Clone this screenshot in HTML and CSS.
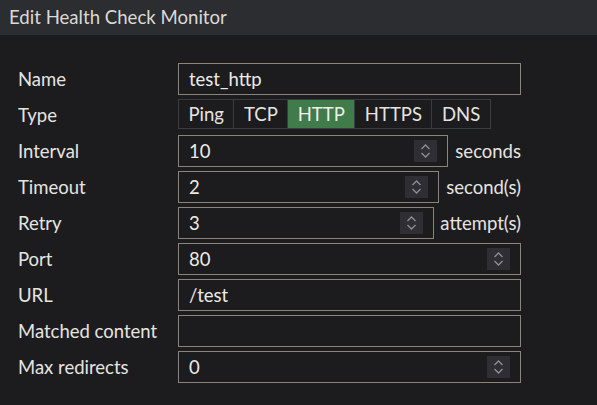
FILE: index.html
```html
<!DOCTYPE html>
<html>
<head>
<meta charset="utf-8">
<link rel="stylesheet" href="styles.css">
</head>
<body>
<div class="dialog">
  <div class="header">Edit Health Check Monitor</div>
  <div class="form">
    <div class="row">
      <div class="label">Name</div>
      <div class="field"><div class="input"><span class="val">test_http</span></div></div>
    </div>
    <div class="row">
      <div class="label">Type</div>
      <div class="field">
        <div class="seg">
          <span class="opt">Ping</span>
          <span class="opt">TCP</span>
          <span class="opt active">HTTP</span>
          <span class="opt">HTTPS</span>
          <span class="opt">DNS</span>
        </div>
      </div>
    </div>
    <div class="row">
      <div class="label">Interval</div>
      <div class="field">
        <div class="input"><span class="val">10</span><span class="spin"><svg viewBox="0 0 23 22" width="23" height="22"><path d="M7.5 9 L11.5 5 L15.5 9 M7.5 13 L11.5 17 L15.5 13" fill="none" stroke="#8f8f96" stroke-width="1.3"/></svg></span></div>
        <span class="unit">seconds</span>
      </div>
    </div>
    <div class="row">
      <div class="label">Timeout</div>
      <div class="field">
        <div class="input"><span class="val">2</span><span class="spin"><svg viewBox="0 0 23 22" width="23" height="22"><path d="M7.5 9 L11.5 5 L15.5 9 M7.5 13 L11.5 17 L15.5 13" fill="none" stroke="#8f8f96" stroke-width="1.3"/></svg></span></div>
        <span class="unit">second(s)</span>
      </div>
    </div>
    <div class="row">
      <div class="label">Retry</div>
      <div class="field">
        <div class="input"><span class="val">3</span><span class="spin"><svg viewBox="0 0 23 22" width="23" height="22"><path d="M7.5 9 L11.5 5 L15.5 9 M7.5 13 L11.5 17 L15.5 13" fill="none" stroke="#8f8f96" stroke-width="1.3"/></svg></span></div>
        <span class="unit unit-tight">attempt(s)</span>
      </div>
    </div>
    <div class="row">
      <div class="label">Port</div>
      <div class="field">
        <div class="input"><span class="val">80</span><span class="spin"><svg viewBox="0 0 23 22" width="23" height="22"><path d="M7.5 9 L11.5 5 L15.5 9 M7.5 13 L11.5 17 L15.5 13" fill="none" stroke="#8f8f96" stroke-width="1.3"/></svg></span></div>
      </div>
    </div>
    <div class="row">
      <div class="label">URL</div>
      <div class="field"><div class="input"><span class="val">/test</span></div></div>
    </div>
    <div class="row">
      <div class="label">Matched content</div>
      <div class="field"><div class="input"><span class="val"></span></div></div>
    </div>
    <div class="row">
      <div class="label">Max redirects</div>
      <div class="field">
        <div class="input"><span class="val">0</span><span class="spin"><svg viewBox="0 0 23 22" width="23" height="22"><path d="M7.5 9 L11.5 5 L15.5 9 M7.5 13 L11.5 17 L15.5 13" fill="none" stroke="#8f8f96" stroke-width="1.3"/></svg></span></div>
      </div>
    </div>
  </div>
</div>
</body>
</html>
```

FILE: styles.css
```css
html, body {
  margin: 0;
  padding: 0;
  background: #1c1c1e;
}
body {
  font-family: Lato, "Noto Sans", sans-serif;
  color: #e6e4e0;
  width: 597px;
  height: 405px;
  overflow: hidden;
}
.header {
  height: 35px;
  background: #2b2d30;
  font-size: 18.6px;
  line-height: 35px;
  padding-left: 9px;
  color: #dcdad6;
}
.form {
  padding: 28px 76px 0 18px;
  display: flex;
  flex-direction: column;
  gap: 4px;
}
.row {
  display: flex;
  align-items: center;
  height: 32px;
}
.label {
  width: 160px;
  flex: none;
  font-size: 18.5px;
}
.field {
  flex: 1;
  display: flex;
  align-items: center;
  height: 32px;
}
.input {
  flex: 1;
  height: 32px;
  box-sizing: border-box;
  border: 1px solid #8b8479;
  display: flex;
  align-items: center;
  padding: 0 10px 0 10px;
}
.val {
  flex: 1;
  font-size: 18.5px;
  color: #eceae6;
}
.spin {
  width: 23px;
  height: 22px;
  background: #2e2e34;
  display: flex;
}
.unit {
  font-size: 18.5px;
  margin-left: 7px;
}
.unit-tight {
  margin-left: 6px;
}
.seg {
  display: flex;
  height: 30px;
  margin-top: -2px;
  border: 1px solid #3a3d40;
  box-sizing: border-box;
}
.opt {
  font-size: 18.5px;
  line-height: 28px;
  padding: 0 9.5px;
  border-left: 1px solid #3a3d40;
}
.opt:first-child {
  border-left: none;
}
.opt.active {
  background: #3f7b4b;
  color: #f0eee8;
}
```
